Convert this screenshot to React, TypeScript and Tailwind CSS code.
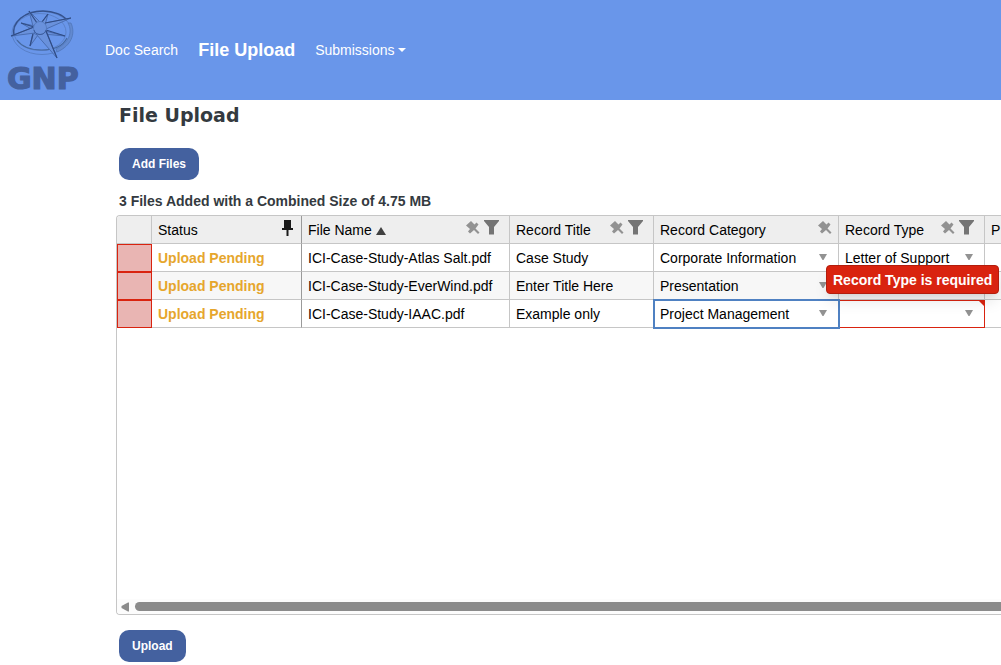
import { useState } from "react";

interface UploadRow {
  name: string;
  title: string;
  category: string;
  type: string;
}

const CATEGORIES = ["Corporate Information", "Presentation", "Project Management"];
const TYPES = ["", "Letter of Support", "Report"];

const initialRows: UploadRow[] = [
  { name: "ICI-Case-Study-Atlas Salt.pdf", title: "Case Study", category: "Corporate Information", type: "Letter of Support" },
  { name: "ICI-Case-Study-EverWind.pdf", title: "Enter Title Here", category: "Presentation", type: "Letter of Support" },
  { name: "ICI-Case-Study-IAAC.pdf", title: "Example only", category: "Project Management", type: "" },
];

const columns = [
  { label: "Status", pinned: true, filter: false, sorted: false },
  { label: "File Name", pinned: false, filter: true, sorted: true },
  { label: "Record Title", pinned: false, filter: true, sorted: false },
  { label: "Record Category", pinned: false, filter: false, sorted: false },
  { label: "Record Type", pinned: false, filter: true, sorted: false },
];

function Logo() {
  return (
    <svg width="82" height="100" viewBox="0 0 82 100" aria-label="GNP" role="img">
      <g fill="none" strokeLinejoin="round">
        <ellipse cx="42" cy="33" rx="30" ry="21.5" stroke="#5880c8" strokeWidth="1" />
        <ellipse cx="40" cy="32" rx="26" ry="18.5" stroke="#5b82ca" strokeWidth="1" />
        <path d="M14 36C11 22 25 11 43 11c11 0 20 4 24 9" stroke="#34518c" strokeWidth="1.4" />
        <path d="M17 40c5 7 15 10 25 10 12 0 21-4 25-12" stroke="#46699f" strokeWidth="1.2" />
        <path d="M68 23c5 9 1 20-12 26l1 3c14-6 19-18 14-29z" fill="#6289cf" stroke="#5077bb" strokeWidth="0.8" />
      </g>
      <g fill="#6991dc" stroke="#4a6eb2" strokeWidth="1" strokeLinejoin="round">
        <path d="M48 14l-7 9 4 2zM65 36l-20-5-2 3zM30 46l3-13 5 2zM21 23l14 3-2 4z" />
        <path d="M29 11l4 15 7-4zM71 18l-26 5 1 6zM57 58L36 34l10-3zM11 36l23-9 1 6z" />
      </g>
      <g fill="none" stroke="#304c85" strokeWidth="1.2">
        <path d="M29 11l8 12M71 18l-26 5M11 36l23-9M21 23l13 4M48 14l-6 8M30 46l3-12M46 31l11 27M46 30l19 6" />
      </g>
      <circle cx="40" cy="28" r="6.5" fill="#6991dc" stroke="#5077bb" strokeWidth="0.8" />
      <path d="M34 30c1 6 11 6 12 0" fill="none" stroke="#3c5c9c" strokeWidth="1" />
      <text x="7" y="89" fill="#44619f" stroke="#44619f" strokeWidth="1.2" fontFamily="'DejaVu Sans', sans-serif" fontWeight="700" fontSize="30">GNP</text>
    </svg>
  );
}

function Pin({ pinned }: { pinned: boolean }) {
  return pinned ? (
    <svg width="14" height="16" viewBox="0 0 14 16" className="text-[#1a1a1a]" aria-hidden="true">
      <path d="M3 0h7v8h2v2H7.500v6h-2v-6H1V8h2z" fill="currentColor" />
    </svg>
  ) : (
    <svg width="14" height="14" viewBox="0 0 14 14" className="text-[#929292]" aria-hidden="true">
      <path d="M0 4.500L5 0l3.500 3.500L10.500 1.500 12.500 3.500 9.500 7.500 13.500 11.500 12 13 8 9l-4 3.500L2 10.500 4 8z" fill="currentColor" />
    </svg>
  );
}

function Filter() {
  return (
    <svg width="15" height="15" viewBox="0 0 15 15" className="text-[#747474]" aria-hidden="true">
      <path d="M0 0h15v1L10 7v7.500H5V7L0 1z" fill="currentColor" />
    </svg>
  );
}

interface CellSelectProps {
  label: string;
  value: string;
  options: string[];
  onChange: (v: string) => void;
}

function CellSelect({ label, value, options, onChange }: CellSelectProps) {
  return (
    <div className="relative">
      <select
        aria-label={label}
        value={value}
        onChange={e => onChange(e.target.value)}
        className="block w-full h-[27px] pl-[6px] pr-6 appearance-none bg-transparent outline-none text-black"
      >
        {options.map(o => <option key={o} value={o}>{o}</option>)}
      </select>
      <svg width="8" height="6" viewBox="0 0 8 6" className="absolute top-[10px] right-[11px] pointer-events-none text-[#929292]" aria-hidden="true">
        <path d="M0 0h8L4.500 6h-1z" fill="currentColor" />
      </svg>
    </div>
  );
}

export default function App() {
  const [rows, setRows] = useState(initialRows);

  const update = (i: number, patch: Partial<UploadRow>) =>
    setRows(rows.map((r, n) => (n === i ? { ...r, ...patch } : r)));

  const cell = "h-7 p-0 border-r border-b border-[#c6c6c6]";

  return (
    <div className="min-h-screen overflow-hidden bg-white font-['Liberation_Sans',Arial,sans-serif] text-sm text-black">
      <header className="flex items-center h-[100px] bg-[#6996ea] text-white">
        <Logo />
        <nav className="flex items-center gap-5 ml-[23px]">
          <a href="#search">Doc Search</a>
          <a href="#upload" className="text-lg font-bold">File Upload</a>
          <button type="button" className="flex items-center gap-[3px]">
            Submissions
            <svg width="8" height="4" viewBox="0 0 8 4" aria-hidden="true"><path d="M0 0h8L4 4z" fill="currentColor" /></svg>
          </button>
        </nav>
      </header>

      <main className="pl-[116px]">
        <div className="pl-[3px] text-[#343a40]">
          <h1 className="font-['DejaVu_Sans',sans-serif] text-[19px] leading-[30px] font-black">File Upload</h1>
          <button type="button" className="block mt-[18px] h-8 px-[13px] rounded-[10px] bg-[#44619f] text-xs font-bold text-white">Add Files</button>
          <p className="mt-[11px] mb-1 leading-5 font-bold">3 Files Added with a Combined Size of 4.75 MB</p>
        </div>

        <section className="flex flex-col h-[400px] border border-r-0 border-[#c6c6c6] rounded-l overflow-hidden">
          <div className="flex-1">
            <table className="w-[1068px] table-fixed border-separate border-spacing-0">
              <colgroup>
                <col className="w-[35px]" />
                <col className="w-[150px]" />
                <col className="w-[208px]" />
                <col className="w-[144px]" />
                <col className="w-[185px]" />
                <col className="w-[146px]" />
                <col className="w-[200px]" />
              </colgroup>
              <thead>
                <tr className="bg-[#eeeeee] text-left">
                  <td className={cell} />
                  {columns.map(c => (
                    <th key={c.label} className={`${cell} font-normal ${c.pinned ? "border-r-[#9a9a9a]" : ""}`}>
                      <div className={`flex items-center h-[27px] pl-[6px] ${c.filter ? "pr-[10px]" : "pr-[6px]"}`}>
                        <span>{c.label}</span>
                        {c.sorted && (
                          <svg width="10" height="8" viewBox="0 0 10 8" className="ml-1 mt-[3px]" aria-hidden="true"><path d="M5 0l5 8H0z" fill="#404040" /></svg>
                        )}
                        <span className="flex items-center gap-1 ml-auto mb-1">
                          <Pin pinned={c.pinned} />
                          {c.filter && <Filter />}
                        </span>
                      </div>
                    </th>
                  ))}
                  <th className={`${cell} font-normal`}><span className="pl-[6px]">P</span></th>
                </tr>
              </thead>
              <tbody>
                {rows.map((r, i) => {
                  const editing = i === 2;
                  const invalid = r.type === "";
                  return (
                    <tr key={r.name} className={i % 2 ? "bg-[#f7f7f7]" : ""}>
                      <td className="h-7 p-0 border border-[#d9230f] bg-[#e9b5b3]" />
                      <td className={`${cell} border-r-[#9a9a9a] pl-[6px] font-bold text-[#e6a62d]`}>Upload Pending</td>
                      <td className={`${cell} pl-[6px]`}>{r.name}</td>
                      <td className={`${cell} pl-[6px]`}>{r.title}</td>
                      <td className={`${cell} relative`}>
                        <CellSelect label="Record Category" value={r.category} options={CATEGORIES} onChange={v => update(i, { category: v })} />
                        {editing && <div className="absolute z-10 -inset-px -right-[2px] -bottom-[2px] border-2 border-[#4f81c2] pointer-events-none" />}
                      </td>
                      <td className={`${cell} relative`}>
                        <CellSelect label="Record Type" value={r.type} options={TYPES} onChange={v => update(i, { type: v })} />
                        {invalid && (
                          <>
                            <div className="absolute inset-0 -right-px -bottom-px border border-[#d9230f] pointer-events-none" />
                            <svg width="7" height="7" viewBox="0 0 7 7" className="absolute top-0 -right-px" aria-hidden="true"><path d="M0 0h7v7z" fill="#d9230f" /></svg>
                            <div role="tooltip" className="absolute z-20 -left-[13px] -top-[35px] h-[29px] px-[6px] flex items-center border border-[#b31d0c] rounded bg-[#d9230f] text-white font-bold whitespace-nowrap shadow-lg">
                              Record Type is required
                            </div>
                          </>
                        )}
                      </td>
                      <td className={cell} />
                    </tr>
                  );
                })}
              </tbody>
            </table>
          </div>

          {/* horizontal scrollbar */}
          <div className="flex items-center gap-[6px] h-[15px] pl-1 bg-[#fcfcfc]">
            <svg width="8" height="10" viewBox="0 0 8 10" aria-hidden="true"><path d="M8 0.500v9H7L0.500 6V4L7 0.500z" fill="#8b8b8b" /></svg>
            <div className="flex-1 h-[9px] rounded-l-full bg-[#8b8b8b]" />
          </div>
        </section>

        <button type="button" className="block ml-[3px] mt-[15px] mb-[3px] h-8 px-[13px] rounded-[10px] bg-[#44619f] text-xs font-bold text-white">Upload</button>
      </main>
    </div>
  );
}
